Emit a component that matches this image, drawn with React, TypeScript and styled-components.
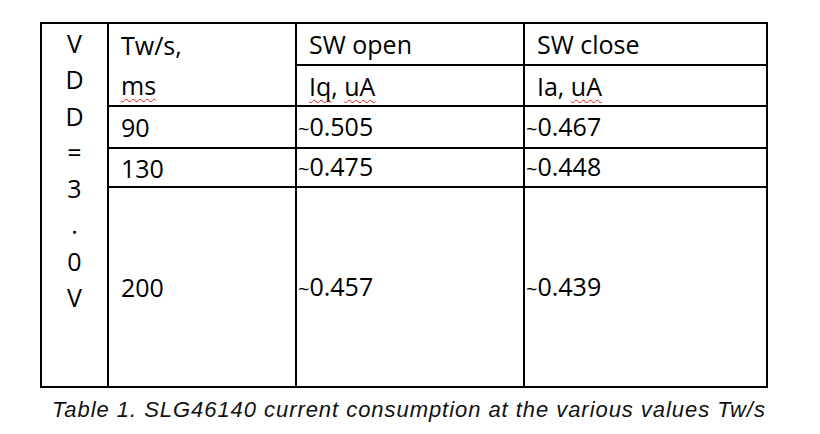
import React from "react";
import styled, { createGlobalStyle } from "styled-components";

const Global = createGlobalStyle`
  html, body { margin: 0; padding: 0; background: #ffffff; }
  body { width: 820px; height: 434px; overflow: hidden; }
`;

const Page = styled.div`
  display: flex;
  flex-direction: column;
  align-items: flex-start;
  padding: 22px 0 0 40px;
`;

const Table = styled.table`
  border-collapse: separate;
  border-spacing: 0;
  table-layout: fixed;
  width: 728px;
  border-top: 2px solid #000;
  border-left: 2px solid #000;
  font-family: "Open Sans", sans-serif;
  font-size: 25px;
  color: #000;
`;

const Row = styled.tr<{ $h: number }>`
  height: ${(p) => p.$h}px;
`;

const Cell = styled.td<{ $pad?: number }>`
  box-sizing: border-box;
  border-right: 2px solid #000;
  border-bottom: 2px solid #000;
  padding: 0 0 0 ${(p) => (p.$pad ?? 12)}px;
  vertical-align: middle;
  line-height: 34px;
  white-space: nowrap;
`;

const StackCell = styled(Cell)`
  vertical-align: top;
  padding: 1px 0 0 12px;
  line-height: 40px;
`;

const VerticalCell = styled(Cell)`
  vertical-align: top;
  text-align: center;
  padding: 1px 0 0 0;
`;

const Letter = styled.div`
  line-height: 36.3px;
`;

const Tilde = styled.span`
  font-size: 20px;
`;

const Misspelt = styled.span`
  text-decoration: underline wavy #e21b1b;
  text-decoration-thickness: 1.4px;
  text-underline-offset: 3px;
  text-decoration-skip-ink: none;
`;

const Caption = styled.div`
  margin-top: 10px;
  padding-left: 12px;
  font-family: "Liberation Sans", Arial, sans-serif;
  font-style: italic;
  font-size: 22px;
  letter-spacing: 0.95px;
  line-height: 24px;
  color: #111;
  white-space: nowrap;
`;

const vdd = ["V", "D", "D", "=", "3", ".", "0", "V"];

const rows = [
  { tw: "90", open: "0.505", close: "0.467", h: 42 },
  { tw: "130", open: "0.475", close: "0.448", h: 39 },
  { tw: "200", open: "0.457", close: "0.439", h: 200 },
];

export default function App() {
  return (
    <>
      <Global />
      <Page>
        <Table>
          <colgroup>
            <col style={{ width: 67 }} />
            <col style={{ width: 188 }} />
            <col style={{ width: 228 }} />
            <col style={{ width: 243 }} />
          </colgroup>
          <tbody>
            <Row $h={41}>
              <VerticalCell rowSpan={5}>
                {vdd.map((c, i) => (
                  <Letter key={i}>{c}</Letter>
                ))}
              </VerticalCell>
              <StackCell rowSpan={2}>
                Tw/s,
                <br />
                <Misspelt>ms</Misspelt>
              </StackCell>
              <Cell>SW open</Cell>
              <Cell>SW close</Cell>
            </Row>
            <Row $h={40}>
              <Cell>
                <Misspelt>Iq</Misspelt>, <Misspelt>uA</Misspelt>
              </Cell>
              <Cell>
                Ia, <Misspelt>uA</Misspelt>
              </Cell>
            </Row>
            {rows.map((r) => (
              <Row $h={r.h} key={r.tw}>
                <Cell>{r.tw}</Cell>
                <Cell $pad={1}>
                  <Tilde>~</Tilde>
                  {r.open}
                </Cell>
                <Cell $pad={1}>
                  <Tilde>~</Tilde>
                  {r.close}
                </Cell>
              </Row>
            ))}
          </tbody>
        </Table>
        <Caption>Table 1. SLG46140 current consumption at the various values Tw/s</Caption>
      </Page>
    </>
  );
}
